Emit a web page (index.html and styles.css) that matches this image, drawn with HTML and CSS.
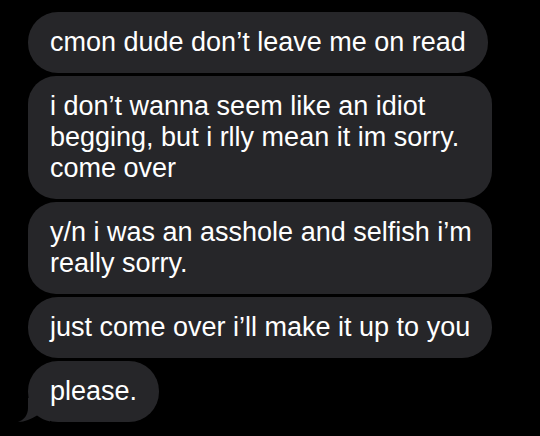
FILE: index.html
```html
<!DOCTYPE html>
<html>
<head>
<meta charset="utf-8">
<link rel="stylesheet" href="styles.css">
</head>
<body>
<div class="thread">
  <div class="bubble">cmon dude don’t leave me on read</div>
  <div class="bubble wide">i don’t wanna seem like an idiot<br>begging, but i rlly mean it im sorry.<br>come over</div>
  <div class="bubble wide">y/n i was an asshole and selfish i’m<br>really sorry.</div>
  <div class="bubble">just come over i’ll make it up to you</div>
  <div class="bubble last">please.<svg class="tail" width="40" height="24" viewBox="0 0 40 24"><path d="M10 0 L10 10 C10 17 6 22 0 24 C7 24 13 21 19 17.5 C23 20.5 27 22.5 32 23.5 L32 0 Z" fill="#262629"/></svg></div>
</div>
</body>
</html>
```
FILE: styles.css
```css
html, body {
  margin: 0;
  padding: 0;
  background: #000;
}
.thread {
  display: flex;
  flex-direction: column;
  align-items: flex-start;
  gap: 3px;
  padding: 12px 0 0 28px;
  font-family: "Liberation Sans", Arial, sans-serif;
  font-size: 27px;
  line-height: 31px;
  color: #fff;
}
.bubble {
  position: relative;
  background: #262629;
  border-radius: 30px;
  padding: 15px 22px;
  white-space: nowrap;
}
.wide {
  width: 420px;
  border-radius: 28px;
}
.tail {
  position: absolute;
  left: -10px;
  bottom: 0;
  display: block;
}
```
